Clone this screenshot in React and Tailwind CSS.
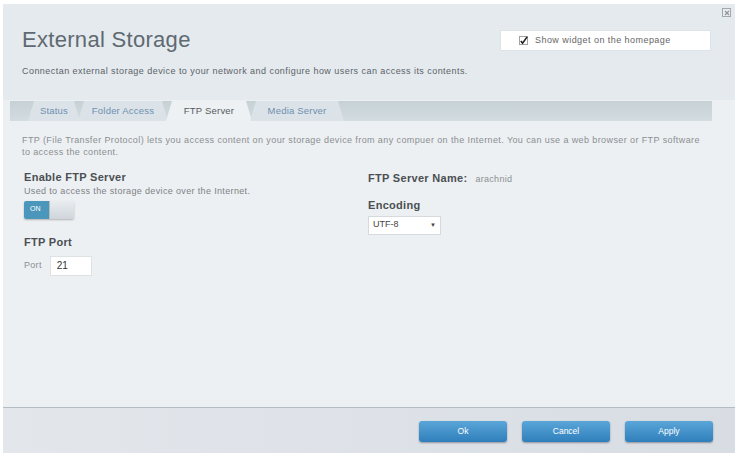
import React from "react";

const tabs = [
  { label: "Status", w: "w-[52px]" },
  { label: "Folder Access", w: "w-[90px]" },
  { label: "FTP Server", w: "w-[86px]", active: true },
  { label: "Media Server", w: "w-[94px]" },
];

const Tab = ({ label, w, active }) => (
  <div
    className={`${w} h-[20px] -mr-[2px] flex items-center justify-center text-[9.5px] tracking-[0.2px] [clip-path:polygon(6px_0,calc(100%-6px)_0,100%_100%,0_100%)] ${
      active ? "bg-[#eef1f3] text-[#555b60]" : "bg-[#dbe3e8] text-[#6f8fb0]"
    }`}
  >
    {label}
  </div>
);

const BlueButton = ({ children }) => (
  <button className="w-[88px] h-[21px] rounded-[3px] bg-gradient-to-b from-[#5aa6d9] to-[#2f7fbb] text-white text-[8.5px] shadow-[0_1px_2px_rgba(0,0,0,0.35)]">
    {children}
  </button>
);

const Label = ({ children, className = "" }) => (
  <div className={`text-[11px] font-bold tracking-[0.3px] text-[#4a4f53] leading-[13px] ${className}`}>{children}</div>
);

export default function App() {
  return (
    <div className="w-[737px] h-[456px] bg-white pt-[4px] pl-[3px] pr-[2px] pb-[3px] font-['Liberation_Sans',Arial,sans-serif]">
      <div className="w-full h-full flex flex-col bg-[#edf0f2]">
        {/* header */}
        <div className="relative h-[96px] bg-[#e4eaee] flex justify-between pl-[19px] pr-[24px]">
          <div className="pt-[22px]">
            <h1 className="text-[22px] leading-[28px] text-[#5f6971] tracking-[0.3px]">External Storage</h1>
            <p className="mt-[11px] text-[9px] tracking-[0.45px] text-[#5d6368]">
              Connectan external storage device to your network and configure how users can access its contents.
            </p>
          </div>
          <div className="mt-[26px] w-[211px] h-[21px] bg-white flex items-center pl-[18px] gap-[7px] border border-[#dde3e7]">
            <svg width="9" height="9" viewBox="0 0 10 10">
              <rect x="0.5" y="0.5" width="9" height="9" fill="#fff" stroke="#999" />
              <path d="M2 5.5 L4 8 L9 1" fill="none" stroke="#222" strokeWidth="1.8" />
            </svg>
            <span className="text-[9px] tracking-[0.45px] text-[#666]">Show widget on the homepage</span>
          </div>
          <div className="absolute top-[4px] right-[4px] w-[9px] h-[9px] border border-[#a0a8ae] bg-[#e8ecef] flex items-center justify-center">
            <svg width="6" height="6" viewBox="0 0 6 6">
              <path d="M1 1 L5 5 M5 1 L1 5" stroke="#8c949a" strokeWidth="1.1" />
            </svg>
          </div>
        </div>

        {/* tabs */}
        <div className="pl-[7px] pt-[1px]">
          <div className="w-[702px] h-[20px] bg-gradient-to-b from-[#c6d1d6] to-[#d3dce0] flex pl-[18px]">
            {tabs.map((t) => (
              <Tab key={t.label} {...t} />
            ))}
          </div>
        </div>

        {/* content */}
        <div className="flex-1 pl-[19px] pr-[16px] pt-[13px]">
          <p className="text-[9px] tracking-[0.4px] leading-[12px] text-[#8a8f93]">
            FTP (File Transfer Protocol) lets you access content on your storage device from any compuer on the Internet. You can use a web browser or FTP software
            <br />
            to access the content.
          </p>
          <div className="flex mt-[12px]">
            <div className="w-[346px] pl-[2px] pt-[1px]">
              <Label>Enable FTP Server</Label>
              <div className="text-[9px] tracking-[0.35px] text-[#7d8286] mt-[1px]">Used to access the storage device over the Internet.</div>
              <div className="mt-[2px] w-[50px] h-[18px] flex rounded-[2px] overflow-hidden shadow-[0_1px_2px_rgba(0,0,0,0.25)]">
                <div className="w-[25px] bg-[#4b96bb] text-white text-[7px] flex items-center pl-[6px]">ON</div>
                <div className="w-[25px] bg-gradient-to-b from-[#e9edf0] to-[#cfd5da] border-l border-[#b5bcc1]" />
              </div>
              <Label className="mt-[17px]">FTP Port</Label>
              <div className="mt-[7px] flex items-center gap-[8px]">
                <span className="text-[9px] tracking-[0.3px] text-[#8a8f93]">Port</span>
                <div className="w-[42px] h-[20px] bg-white border border-[#dde2e5] flex items-center pl-[6px] text-[10px] text-[#333]">
                  21
                </div>
              </div>
            </div>
            <div className="pt-[2px]">
              <div className="flex items-baseline gap-[8px]">
                <Label>FTP Server Name:</Label>
                <span className="text-[9px] tracking-[0.3px] text-[#8a8f93]">arachnid</span>
              </div>
              <Label className="mt-[12px]">Encoding</Label>
              <div className="mt-[4px] w-[73px] h-[19px] bg-white border border-[#d5dade] flex items-center justify-between px-[4px] text-[9px] text-[#444]">
                <span>UTF-8</span>
                <span className="text-[6px]">▼</span>
              </div>
            </div>
          </div>
        </div>

        {/* footer */}
        <div className="h-[46px] border-t border-[#b3bdc3] bg-gradient-to-r from-[#e3e7ec] to-[#d8dde4] flex items-center justify-end gap-[15px] pr-[22px] pt-[2px]">
          <BlueButton>Ok</BlueButton>
          <BlueButton>Cancel</BlueButton>
          <BlueButton>Apply</BlueButton>
        </div>
      </div>
    </div>
  );
}
